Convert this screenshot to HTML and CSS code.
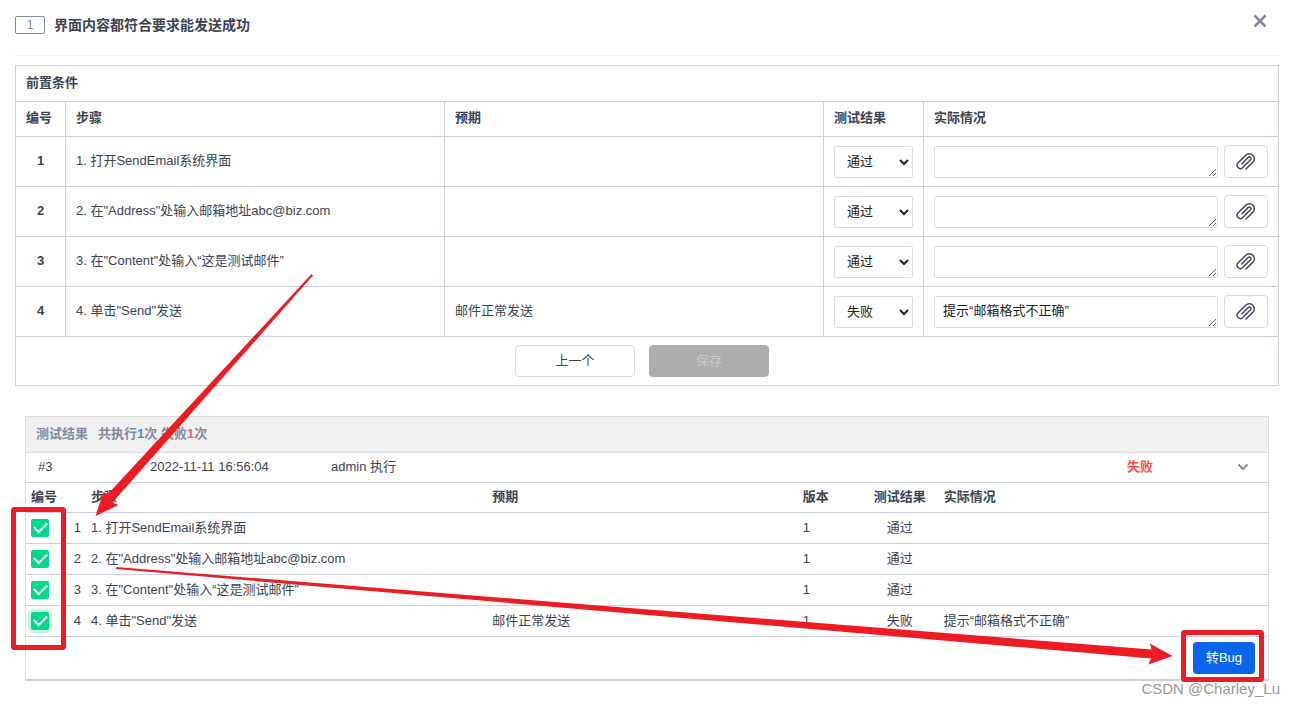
FILE: index.html
```html
<!DOCTYPE html>
<html lang="zh-CN">
<head>
<meta charset="utf-8">
<title>界面内容都符合要求能发送成功</title>
<link rel="stylesheet" href="styles.css">
</head>
<body>
<svg class="symbols" aria-hidden="true">
  <symbol id="clip" viewBox="0 0 24 24">
    <path d="M12 20.500 L20.240 12.250 a6 6 0 0 0 -8.490 -8.490 l-9.190 9.190 a4 4 0 0 0 5.660 5.660 l9.190 -9.200 a2 2 0 0 0 -2.830 -2.830 l-7.500 7.500"/>
  </symbol>
</svg>
<main class="page">
  <header class="head">
    <span class="tag">1</span>
    <h1 class="title">界面内容都符合要求能发送成功</h1>
    <button class="close" type="button" aria-label="关闭">
      <svg width="14" height="14" viewBox="0 0 14 14"><path d="M1.500 1.500 L12.500 12.500 M12.500 1.500 L1.500 12.500"/></svg>
    </button>
  </header>

  <table class="steps">
    <colgroup><col class="c-no"><col><col><col class="c-result"><col class="c-real"></colgroup>
    <thead>
      <tr class="pre"><th colspan="5">前置条件</th></tr>
      <tr class="names"><th>编号</th><th>步骤</th><th>预期</th><th>测试结果</th><th>实际情况</th></tr>
    </thead>
    <tbody>
      <tr><th class="no">1</th><td>1. 打开SendEmail系统界面</td><td></td>
        <td class="field"><select class="select" aria-label="步骤1测试结果"><option selected>通过</option><option>失败</option></select></td>
        <td class="field"><div class="real"><textarea class="area" rows="1" aria-label="步骤1实际情况"></textarea><button class="attach" type="button" aria-label="附件"><svg width="20" height="20"><use href="#clip"/></svg></button></div></td></tr>
      <tr><th class="no">2</th><td>2. 在"Address"处输入邮箱地址abc@biz.com</td><td></td>
        <td class="field"><select class="select" aria-label="步骤2测试结果"><option selected>通过</option><option>失败</option></select></td>
        <td class="field"><div class="real"><textarea class="area" rows="1" aria-label="步骤2实际情况"></textarea><button class="attach" type="button" aria-label="附件"><svg width="20" height="20"><use href="#clip"/></svg></button></div></td></tr>
      <tr><th class="no">3</th><td>3. 在"Content"处输入“这是测试邮件”</td><td></td>
        <td class="field"><select class="select" aria-label="步骤3测试结果"><option selected>通过</option><option>失败</option></select></td>
        <td class="field"><div class="real"><textarea class="area" rows="1" aria-label="步骤3实际情况"></textarea><button class="attach" type="button" aria-label="附件"><svg width="20" height="20"><use href="#clip"/></svg></button></div></td></tr>
      <tr><th class="no">4</th><td>4. 单击"Send"发送</td><td>邮件正常发送</td>
        <td class="field"><select class="select" aria-label="步骤4测试结果"><option>通过</option><option selected>失败</option></select></td>
        <td class="field"><div class="real"><textarea class="area" rows="1" aria-label="步骤4实际情况">提示“邮箱格式不正确”</textarea><button class="attach" type="button" aria-label="附件"><svg width="20" height="20"><use href="#clip"/></svg></button></div></td></tr>
      <tr class="last"><td class="field" colspan="5"><div class="actions"><button class="btn" type="button">上一个</button><button class="btn save" type="button" disabled>保存</button></div></td></tr>
    </tbody>
  </table>

  <section class="results">
    <h2 class="bar"><span>测试结果</span><span>共执行<b class="blue">1</b>次 失败<b class="pink">1</b>次</span></h2>
    <div class="run">
      <span>#3</span><span>2022-11-11 16:56:04</span><span>admin 执行</span><strong class="fail">失败</strong>
      <button class="toggle" type="button" aria-label="收起"><svg width="12" height="8" viewBox="0 0 12 8"><path d="M1.500 1.500 L6 6 L10.500 1.500"/></svg></button>
    </div>
    <table class="detail">
      <colgroup><col class="d-no"><col class="d-step"><col class="d-expect"><col class="d-version"><col class="d-result"><col></colgroup>
      <thead>
        <tr><th>编号</th><th>步骤</th><th>预期</th><th>版本</th><th class="mid">测试结果</th><th>实际情况</th></tr>
      </thead>
      <tbody>
        <tr><td><label class="pick"><input class="check" type="checkbox" checked>1</label></td><td>1. 打开SendEmail系统界面</td><td></td><td>1</td><td class="mid">通过</td><td></td></tr>
        <tr><td><label class="pick"><input class="check" type="checkbox" checked>2</label></td><td>2. 在"Address"处输入邮箱地址abc@biz.com</td><td></td><td>1</td><td class="mid">通过</td><td></td></tr>
        <tr><td><label class="pick"><input class="check" type="checkbox" checked>3</label></td><td>3. 在"Content"处输入“这是测试邮件”</td><td></td><td>1</td><td class="mid">通过</td><td></td></tr>
        <tr><td><label class="pick"><input class="check active" type="checkbox" checked>4</label></td><td>4. 单击"Send"发送</td><td>邮件正常发送</td><td>1</td><td class="mid">失败</td><td>提示“邮箱格式不正确”</td></tr>
      </tbody>
    </table>
    <div class="foot"><button class="bug" type="button">转Bug</button></div>
  </section>

  <svg class="marks" width="1294" height="706" viewBox="0 0 1294 706" aria-hidden="true">
    <path class="arrow" d="M311.500 274 L313 275.500 L112.500 502.500 L118.500 505 L95.500 516 L103.500 492 L107.500 494.500 Z"/>
    <path class="arrow" d="M116 567 L1151.500 649.500 L1150 643.500 L1172.500 656 L1148.500 664.500 L1151 658.500 L116 569 Z"/>
    <rect class="frame" x="13.500" y="509.500" width="50" height="138" rx="1"/>
    <rect class="frame" x="1183.500" y="632.500" width="78" height="47" rx="1"/>
  </svg>
  <span class="watermark">CSDN @Charley_Lu</span>
</main>
</body>
</html>
```
FILE: styles.css
```css
* { box-sizing: border-box; }

body {
  margin: 0;
  background: #fff;
  color: #3c4353;
  font: 13px/20px "Liberation Sans", "Noto Sans CJK SC", sans-serif;
}

button, select, textarea { font: inherit; color: inherit; margin: 0; }
button { cursor: pointer; }

.symbols { display: none; }
.page { position: relative; padding: 0 15px 24px; }

.head {
  display: flex;
  align-items: center;
  gap: 9px;
  height: 56px;
  padding-bottom: 6px;
  margin-bottom: 9px;
  border-bottom: 1px solid #eee;
}
.tag {
  width: 30px;
  height: 18px;
  border: 1px solid #838a9d;
  border-radius: 2px;
  color: #838a9d;
  font-size: 12px;
  line-height: 16px;
  text-align: center;
}
.title { flex: 1; margin: 0; font-size: 14px; line-height: 20px; }
.close {
  display: flex;
  padding: 0;
  margin: 0 12px 8px 0;
  border: 0;
  background: none;
}
.close path { fill: none; stroke: #838a9d; stroke-width: 2.600; }

table { width: 100%; border-collapse: collapse; table-layout: fixed; }
th { text-align: left; }

.steps th, .steps td { padding: 0 10px 2px; border: 1px solid #cbd0db; }
.steps tr { height: 50px; }
.steps .pre { height: 36px; }
.steps .names { height: 35px; }
.steps .last { height: 49px; }
.steps .no { text-align: center; }
.steps .field { padding: 0 10px; }
.c-no { width: 50px; }
.c-result { width: 100px; }
.c-real { width: 28.100%; }

.select {
  display: block;
  width: 100%;
  height: 32px;
  padding: 4px 0 4px 8px;
  border: 1px solid #dcdcdc;
  border-radius: 2px;
  background: #fff;
  color: #222;
}
.real { display: flex; align-items: flex-end; gap: 6px; }
.area {
  flex: 1;
  min-width: 0;
  height: 32px;
  padding: 4px 8px;
  border: 1px solid #dcdcdc;
  border-radius: 2px;
  color: #222;
  overflow: hidden;
  resize: vertical;
}
.attach {
  display: flex;
  align-items: center;
  justify-content: center;
  width: 44px;
  height: 33px;
  padding: 0;
  border: 1px solid #d8dbe5;
  border-radius: 4px;
  background: #fff;
}
.attach svg { fill: none; stroke: #3c4353; stroke-width: 1.700; stroke-linecap: round; }

.actions { display: flex; justify-content: center; gap: 14px; padding-right: 10px; }
.btn {
  width: 120px;
  height: 32px;
  padding: 0;
  border: 1px solid #d8dbe5;
  border-radius: 4px;
  background: #fff;
}
.save { border-color: #adadad; background: #adadad; color: #c8c8c8; }

.results {
  margin: 30px 10px 0;
  border: 1px solid #ddd;
  border-bottom: 2px solid #cbd0db;
}
.bar {
  display: flex;
  gap: 10px;
  margin: 0;
  padding: 7px 10px 8px;
  border-bottom: 1px solid #ddd;
  background: #f0f0f0;
  color: #838a9d;
  font-size: 13px;
}
.blue { color: #2e90fa; }
.pink { color: #ff5a78; }
.run {
  display: grid;
  grid-template-columns: 112px 181px 1fr 110px 12px;
  align-items: center;
  height: 30px;
  padding: 0 19px 2px 12px;
  border-bottom: 1px solid #cbd0db;
}
.fail { color: #ff4d4d; }
.toggle { display: flex; padding: 0; border: 0; background: none; }
.toggle path { fill: none; stroke: #838a9d; stroke-width: 2; }

.detail th, .detail td { padding: 0 5px; border-bottom: 1px solid #cbd0db; }
.detail tr { height: 31px; }
.detail thead tr { height: 29px; }
.detail .mid { text-align: center; }
.d-no { width: 60px; }
.d-step { width: 32.300%; }
.d-expect { width: 25%; }
.d-version { width: 63px; }
.d-result { width: 78px; }
.pick { display: flex; justify-content: space-between; align-items: center; }
.check {
  display: flex;
  align-items: center;
  justify-content: center;
  appearance: none;
  width: 18px;
  height: 18px;
  margin: 0;
  border-radius: 2px;
  background: #00da88;
}
.check::before {
  content: "";
  width: 11px;
  height: 6px;
  margin-bottom: 3px;
  border: solid #fff;
  border-width: 0 0 2px 2px;
  transform: rotate(-45deg);
}
.check.active { box-shadow: 0 0 0 3px #c9f6e3; }

.foot { display: flex; justify-content: flex-end; padding: 5px 13px; }
.bug {
  width: 62px;
  height: 32px;
  padding: 0;
  border: 0;
  border-radius: 4px;
  background: #0c64eb;
  color: #fff;
}

.marks { position: absolute; top: 0; left: 0; pointer-events: none; }
.arrow { fill: #ed1c24; }
.frame { fill: none; stroke: #ed1c24; stroke-width: 5; }
.watermark {
  position: absolute;
  right: 14px;
  bottom: 6px;
  color: #999;
  font-size: 15px;
}
```
